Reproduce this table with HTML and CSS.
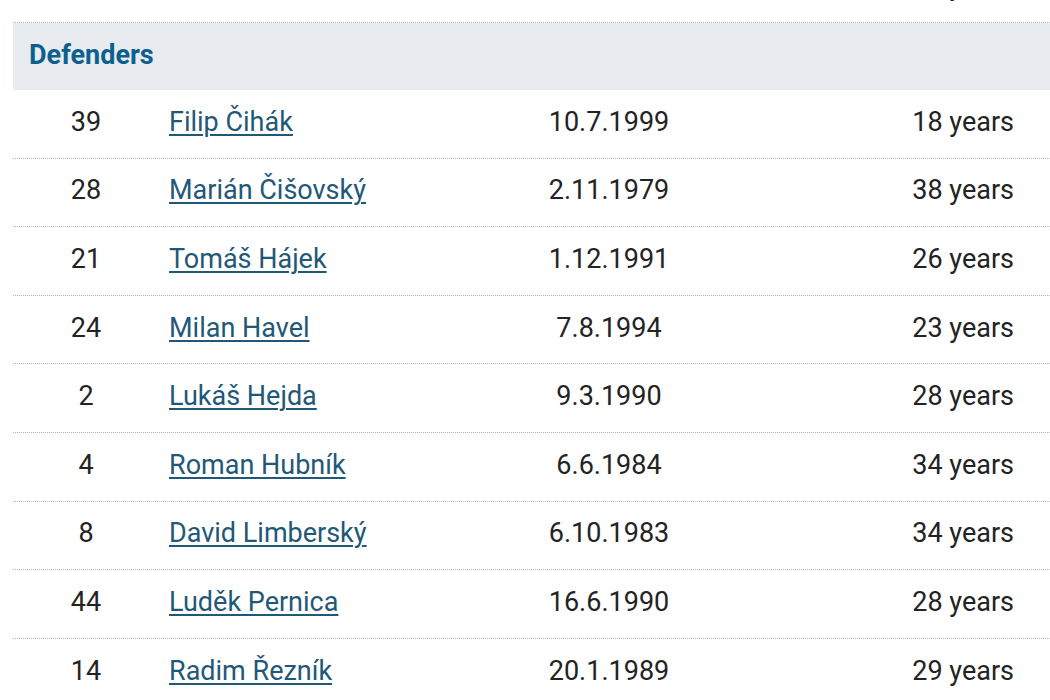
FILE: index.html
```html
<!DOCTYPE html>
<html lang="cs">
<head>
<meta charset="utf-8">
<link rel="stylesheet" href="styles.css">
</head>
<body>
<div class="squad">
  <div class="row">
    <div class="num">1</div>
    <div class="name"><a href="#">Tomáš Vaclík</a></div>
    <div class="date">29.3.1989</div>
    <div class="age">29 years</div>
  </div>
  <div class="group">Defenders</div>
  <div class="row">
    <div class="num">39</div>
    <div class="name"><a href="#">Filip Čihák</a></div>
    <div class="date">10.7.1999</div>
    <div class="age">18 years</div>
  </div>
  <div class="row">
    <div class="num">28</div>
    <div class="name"><a href="#">Marián Čišovský</a></div>
    <div class="date">2.11.1979</div>
    <div class="age">38 years</div>
  </div>
  <div class="row">
    <div class="num">21</div>
    <div class="name"><a href="#">Tomáš Hájek</a></div>
    <div class="date">1.12.1991</div>
    <div class="age">26 years</div>
  </div>
  <div class="row">
    <div class="num">24</div>
    <div class="name"><a href="#">Milan Havel</a></div>
    <div class="date">7.8.1994</div>
    <div class="age">23 years</div>
  </div>
  <div class="row">
    <div class="num">2</div>
    <div class="name"><a href="#">Lukáš Hejda</a></div>
    <div class="date">9.3.1990</div>
    <div class="age">28 years</div>
  </div>
  <div class="row">
    <div class="num">4</div>
    <div class="name"><a href="#">Roman Hubník</a></div>
    <div class="date">6.6.1984</div>
    <div class="age">34 years</div>
  </div>
  <div class="row">
    <div class="num">8</div>
    <div class="name"><a href="#">David Limberský</a></div>
    <div class="date">6.10.1983</div>
    <div class="age">34 years</div>
  </div>
  <div class="row">
    <div class="num">44</div>
    <div class="name"><a href="#">Luděk Pernica</a></div>
    <div class="date">16.6.1990</div>
    <div class="age">28 years</div>
  </div>
  <div class="row">
    <div class="num">14</div>
    <div class="name"><a href="#">Radim Řezník</a></div>
    <div class="date">20.1.1989</div>
    <div class="age">29 years</div>
  </div>
</div>
</body>
</html>
```

FILE: styles.css
```css
html, body {
  margin: 0;
  padding: 0;
  background: #ffffff;
  overflow: hidden;
}

body {
  font-family: Roboto, "Noto Sans", "Liberation Sans", sans-serif;
  color: #232323;
}

.squad {
  margin: -45.6px 0 0 13px;
  display: flex;
  flex-direction: column;
}

.row {
  display: grid;
  grid-template-columns: 146px 330px 240px 1fr;
  align-items: center;
  height: 68.6px;
  box-sizing: border-box;
  padding-bottom: 4px;
  border-bottom: 1px dotted #b4b4b4;
  font-size: 27px;
}

.num {
  text-align: center;
}

.name {
  padding-left: 10px;
}

.name a {
  color: #1f5878;
  text-decoration: underline;
  text-decoration-thickness: 2px;
  text-underline-offset: 3px;
}

.date {
  text-align: center;
}

.age {
  text-align: right;
  padding-right: 36px;
}

.group {
  height: 67px;
  box-sizing: border-box;
  padding-bottom: 4px;
  display: flex;
  align-items: center;
  padding-left: 16px;
  background: #e8ecf0;
  color: #0d5f8e;
  font-weight: 700;
  font-size: 27px;
}
```
